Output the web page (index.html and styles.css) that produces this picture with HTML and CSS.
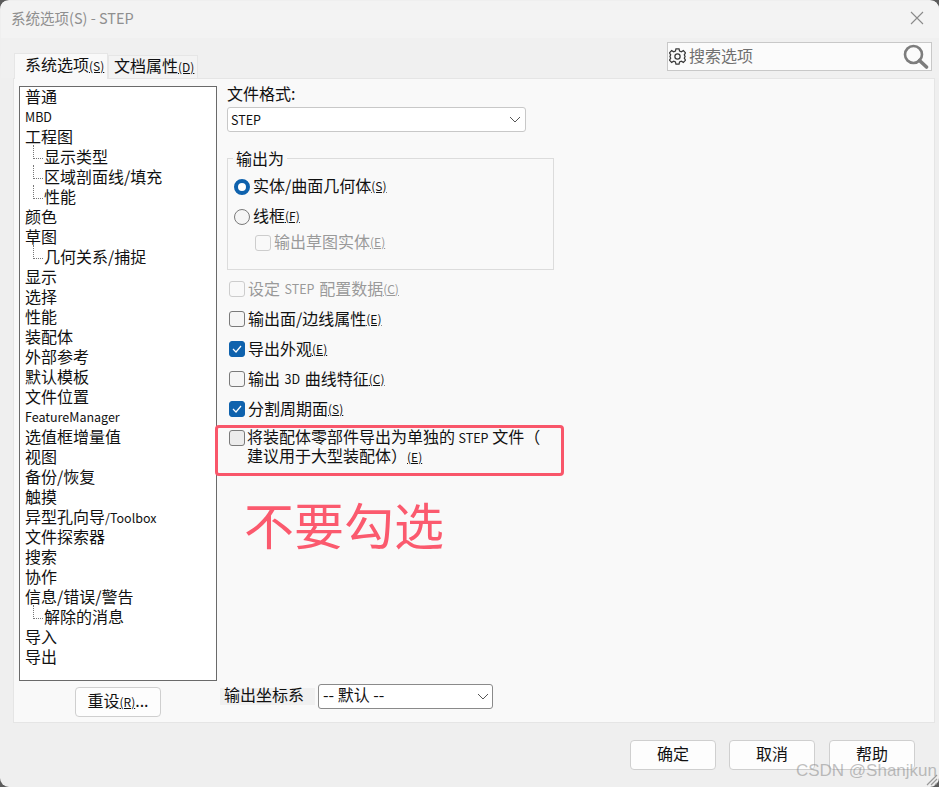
FILE: index.html
```html
<!DOCTYPE html>
<html lang="zh">
<head>
<meta charset="utf-8">
<title>系统选项(S) - STEP</title>
<link rel="stylesheet" href="styles.css">
</head>
<body>
<div class="window">
  <header class="titlebar">
    <span class="title">系统选项(S) - STEP</span>
    <svg class="close" width="14" height="14" viewBox="0 0 14 14"><path d="M1 1l12 12M13 1L1 13" stroke="#8a8a8a" stroke-width="1.1" fill="none"/></svg>
  </header>
  <div class="tabrow">
    <div class="tab active">系统选项<span class="mn">(S)</span></div>
    <div class="tab">文档属性<span class="mn">(D)</span></div>
    <div class="search">
      <svg class="gear" width="17" height="17" viewBox="1 1 22 22" fill="none" stroke="#3a3a3a" stroke-width="1.6"><circle cx="12" cy="12" r="3.4"/><path d="M10 2h4l.7 3 2.2 1 2.7-1.6 2.8 2.8L20.800 9.900l1 2.100-1 2.100 1.600 2.700-2.800 2.800-2.700-1.600-2.200 1-.7 3h-4l-.7-3-2.200-1-2.700 1.600-2.800-2.800 1.600-2.700-1-2.100 1-2.100L1.600 7.200l2.800-2.800 2.700 1.600 2.200-1z"/></svg>
      <span class="search-text">搜索选项</span>
      <svg class="lens" width="26" height="25" viewBox="0 0 26 25" fill="none" stroke="#7d7d7d"><circle cx="10.500" cy="10.500" r="8.500" stroke-width="2.600"/><path d="M16.500 16.500l7 6.500" stroke-width="3.600" stroke-linecap="round"/></svg>
    </div>
  </div>

  <main class="panel">
    <div class="left">
      <div class="tree">
        <div class="node">普通</div>
        <div class="node latin">MBD</div>
        <div class="node">工程图</div>
        <div class="node sub">显示类型</div>
        <div class="node sub">区域剖面线/填充</div>
        <div class="node sub">性能</div>
        <div class="node">颜色</div>
        <div class="node">草图</div>
        <div class="node sub">几何关系/捕捉</div>
        <div class="node">显示</div>
        <div class="node">选择</div>
        <div class="node">性能</div>
        <div class="node">装配体</div>
        <div class="node">外部参考</div>
        <div class="node">默认模板</div>
        <div class="node">文件位置</div>
        <div class="node latin">FeatureManager</div>
        <div class="node">选值框增量值</div>
        <div class="node">视图</div>
        <div class="node">备份/恢复</div>
        <div class="node">触摸</div>
        <div class="node">异型孔向导<span class="small">/Toolbox</span></div>
        <div class="node">文件探索器</div>
        <div class="node">搜索</div>
        <div class="node">协作</div>
        <div class="node">信息/错误/警告</div>
        <div class="node sub">解除的消息</div>
        <div class="node">导入</div>
        <div class="node">导出</div>
      </div>
      <button class="btn reset">重设<span class="mn">(R)</span>...</button>
    </div>

    <div class="right">
      <div class="label">文件格式:</div>
      <div class="select format"><span class="small">STEP</span>
        <svg width="12" height="7" viewBox="0 0 12 7"><path d="M1 1l5 5 5-5" stroke="#555" fill="none"/></svg>
      </div>

      <div class="group">
        <div class="legend">输出为</div>
        <div class="opt first"><span class="radio on"></span>实体/曲面几何体<span class="mn">(S)</span></div>
        <div class="opt second"><span class="radio"></span>线框<span class="mn">(F)</span></div>
        <div class="opt third disabled"><span class="check"></span>输出草图实体<span class="mn">(E)</span></div>
      </div>

      <div class="row disabled"><span class="check"></span>设定 <span class="small gap">STEP</span> 配置数据<span class="mn">(C)</span></div>
      <div class="row"><span class="check"></span>输出面/边线属性<span class="mn">(E)</span></div>
      <div class="row"><span class="check on"><svg width="10" height="8" viewBox="0 0 10 8"><path d="M1 4l3 3 5-6" stroke="#fff" stroke-width="1.200" fill="none"/></svg></span>导出外观<span class="mn">(E)</span></div>
      <div class="row"><span class="check"></span>输出 <span class="small gap">3D</span> 曲线特征<span class="mn">(C)</span></div>
      <div class="row"><span class="check on"><svg width="10" height="8" viewBox="0 0 10 8"><path d="M1 4l3 3 5-6" stroke="#fff" stroke-width="1.200" fill="none"/></svg></span>分割周期面<span class="mn">(S)</span></div>
      <div class="row multi"><span class="check grey"></span><span class="multi-text">将装配体零部件导出为单独的 <span class="small">STEP</span> 文件（<br>建议用于大型装配体）<span class="mn">(E)</span></span></div>

      <div class="coord">
        <span class="coord-label">输出坐标系</span>
        <div class="select coord-select"><span class="coord-value">-- 默认 --</span>
          <svg width="12" height="7" viewBox="0 0 12 7"><path d="M1 1l5 5 5-5" stroke="#555" fill="none"/></svg>
        </div>
      </div>

      <div class="redbox"></div>
      <div class="note">不要勾选</div>
    </div>
  </main>

  <footer class="footer">
    <button class="btn">确定</button>
    <button class="btn">取消</button>
    <button class="btn">帮助</button>
  </footer>

  <div class="watermark">CSDN @Shanjkun</div>
  <svg class="grip" width="14" height="14" viewBox="0 0 14 14"><path d="M13 3L3 13M13 7l-6 6M13 11l-2 2" stroke="#9a9a9a" stroke-width="1.200" fill="none"/></svg>
</div>
</body>
</html>
```
FILE: styles.css
```css
* { box-sizing: border-box; }
html, body { margin: 0; height: 100%; }
body {
  background: #5c5c5c;
  font-family: "Noto Sans CJK SC", "Noto Sans", sans-serif;
  font-size: 16px;
  color: #111;
  overflow: hidden;
}
.window {
  position: relative;
  width: 939px;
  height: 787px;
  padding: 1px 0 1px 1px;
  display: flex;
  flex-direction: column;
  background: #efefef;
  border-radius: 9px;
  overflow: hidden;
}
.titlebar {
  height: 37px;
  flex: none;
  display: flex;
  align-items: center;
  justify-content: space-between;
  padding: 0 15px 0 10px;
  background: #f3f3f3;
}
.title { font-size: 14.500px; color: #8f8f8f; padding-bottom: 4px; }
.close { margin-bottom: 3px; }
.tabrow {
  height: 40px;
  flex: none;
  display: flex;
  align-items: flex-end;
  padding: 0 7px 0 13px;
  background: #f0f0f0;
}
.tab {
  height: 23px;
  width: 90px;
  line-height: 18px;
  padding-left: 5px;
  background: #f3f3f3;
  border: 1px solid #e6e6e6;
  border-bottom: none;
  white-space: nowrap;
}
.tab.active {
  height: 26px;
  width: 94px;
  padding-left: 10px;
  line-height: 20px;
  background: #f9f9f9;
  margin-bottom: -1px;
  position: relative;
  z-index: 1;
}
.mn {
  font-size: 12px;
  text-decoration: underline;
  text-underline-offset: 1px;
}
.search {
  margin-left: auto;
  margin-bottom: 7px;
  width: 265px;
  height: 29px;
  display: flex;
  align-items: center;
  background: #fbfbfb;
  border: 1px solid #c8c8c8;
  padding: 0 2px 0 1px;
}
.gear { flex: none; }
.search-text { margin-left: 3px; padding-bottom: 4px; color: #707070; }
.lens { margin-left: auto; }
.panel {
  flex: none;
  height: 645px;
  margin: 0 4px 0 12px;
  padding: 0 0 0 5px;
  display: flex;
  background: #f9f9f9;
  border: 1px solid #e5e5e5;
}
.left { width: 198px; flex: none; padding-top: 7px; display: flex; flex-direction: column; }
.tree {
  height: 595px;
  flex: none;
  padding: 0 0 0 5px;
  background: #fff;
  border: 1px solid #6a6a6a;
}
.node {
  position: relative;
  height: 20px;
  line-height: 18px;
  white-space: nowrap;
}
.node.latin { line-height: 20px; }
.node.latin, .small { font-size: 12.500px; }
.node.sub { padding-left: 19px; }
.node.sub::before {
  content: "";
  position: absolute;
  left: 8px;
  top: -2px;
  width: 9px;
  height: 13px;
  border-left: 1px dotted #777;
  border-bottom: 1px dotted #777;
}
.gap { margin: 0 1px; }
.btn {
  font: inherit;
  color: #111;
  width: 86px;
  height: 30px;
  padding: 0 0 4px;
  background: #fdfdfd;
  border: 1px solid #cfcfcf;
  border-radius: 4px;
}
.reset { margin: 6px 0 0 56px; }
.right {
  position: relative;
  flex: 1;
  margin-left: 10px;
  padding: 6px 0 13px;
  display: flex;
  flex-direction: column;
}
.label { height: 18px; line-height: 16px; }
.select {
  display: flex;
  align-items: center;
  justify-content: space-between;
  background: #fff;
  border: 1px solid #c8c8c8;
  border-radius: 3px;
}
.format { width: 299px; height: 25px; margin-top: 4px; padding: 0 4px 0 3px; }
.group {
  position: relative;
  width: 327px;
  height: 112px;
  margin-top: 26px;
  padding: 18px 0 0 6px;
  border: 1px solid #dcdcdc;
}
.legend {
  position: absolute;
  left: 5px;
  top: -9px;
  padding: 0 3px;
  height: 18px;
  line-height: 16px;
  background: #f9f9f9;
}
.opt {
  height: 20px;
  padding-bottom: 4px;
  display: flex;
  align-items: center;
  white-space: nowrap;
}
.opt .radio, .opt .check { margin-top: 4px; }
.second { margin-top: 10px; }
.third { margin: 6px 0 0 21px; }
.row {
  height: 30px;
  padding-bottom: 2px;
  display: flex;
  align-items: center;
  white-space: pre;
  margin-left: 2px;
}
.row .check { margin-top: 2px; }
.group + .row { margin-top: 4px; }
.disabled { color: #9a9a9a; }
.radio {
  width: 16px;
  height: 16px;
  margin-right: 3px;
  flex: none;
  border-radius: 50%;
  background: #f5f5f5;
  border: 1px solid #7a7a7a;
}
.radio.on { background: #fff; border: 4px solid #0f62ad; }
.check {
  width: 16px;
  height: 16px;
  margin-right: 3px;
  flex: none;
  display: flex;
  align-items: center;
  justify-content: center;
  border-radius: 3px;
  background: #f5f5f5;
  border: 1px solid #7a7a7a;
}
.disabled .check { background: #f9f9f9; border-color: #cdcdcd; }
.check.on { background: #0f62ad; border-color: #0f62ad; }
.check.grey { background: #ececec; }
.multi { height: auto; align-items: flex-start; margin-top: 6px; padding-bottom: 0; }
.multi .check { margin: 0 2px 0 0; }
.multi-text { line-height: 16.500px; margin-top: -2px; }
.coord { margin-top: auto; display: flex; align-items: center; margin-left: -7px; }
.coord-label {
  width: 95px;
  height: 17px;
  line-height: 12px;
  padding-left: 4px;
  background: #f0f0f0;
  margin-right: 3px;
}
.coord-select { width: 175px; height: 25px; padding: 0 3px 0 4px; border-color: #8a8a8a; }
.coord-value { white-space: pre; padding-bottom: 5px; }
.redbox {
  position: absolute;
  left: -12px;
  top: 346px;
  width: 349px;
  height: 51px;
  border: 3px solid #f9566a;
  border-radius: 4px;
}
.note {
  position: absolute;
  left: 17px;
  top: 409px;
  font-size: 50px;
  line-height: 70px;
  color: #fb5a6e;
  white-space: nowrap;
}
.footer {
  flex: 1;
  display: flex;
  align-items: flex-start;
  padding: 17px 0 0 629px;
}
.footer .btn + .btn { margin-left: 13px; }
.footer .btn:last-of-type { margin-left: 14px; }
.watermark {
  position: absolute;
  right: 2px;
  bottom: 6px;
  font-family: "Liberation Sans", sans-serif;
  font-size: 17px;
  color: rgba(130,130,130,.5);
  white-space: nowrap;
}
.grip { position: absolute; right: 1px; bottom: 1px; }
```
